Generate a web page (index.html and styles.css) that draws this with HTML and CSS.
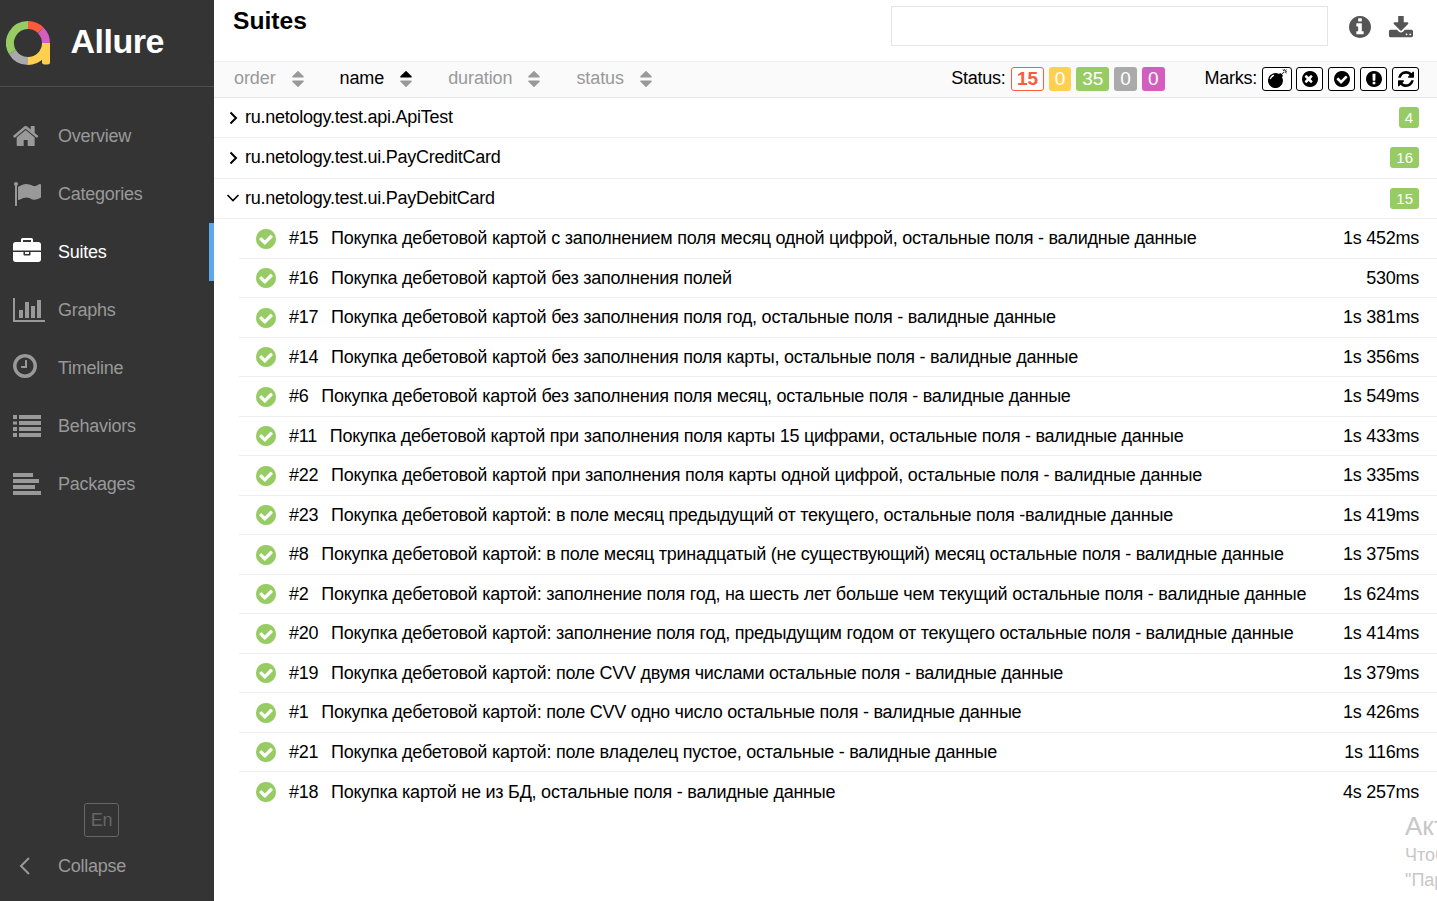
FILE: index.html
```html
<!DOCTYPE html>
<html lang="ru">
<head>
    <meta charset="UTF-8">
    <meta name="viewport" content="width=device-width, initial-scale=1.0">
    <title>Allure Report</title>
    <link rel="stylesheet" href="styles.css">
</head>
<body>
    <svg class="sprite" xmlns="http://www.w3.org/2000/svg">
        <symbol id="i-home" viewBox="84 0 1792 1792"><path d="M1472 992v480q0 26-19 45t-45 19h-384v-384h-256v384h-384q-26 0-45-19t-19-45v-480q0-1 .5-3t.5-3l575-474 575 474q1 2 1 6zm223-69l-62 74q-8 9-21 11h-3q-13 0-21-7l-692-577-692 577q-12 8-24 7-13-2-21-11l-62-74q-8-10-7-23.5t11-21.5l719-599q32-26 76-26t76 26l244 204v-195q0-14 9-23t23-9h192q14 0 23 9t9 23v408l219 182q10 8 11 21.5t-7 23.5z"/></symbol>
        <symbol id="i-flag" viewBox="0 0 1792 1792"><path d="M320 256q0 72-64 110v1266q0 13-9.500 22.500t-22.500 9.500h-64q-13 0-22.500-9.500t-9.500-22.500v-1266q-64-38-64-110 0-53 37.500-90.500t90.500-37.500 90.500 37.500 37.500 90.500zm1472 64v763q0 25-12.500 38.500t-39.500 27.500q-215 116-369 116-61 0-123.500-22t-108.500-48-115.500-48-142.500-22q-192 0-464 146-17 9-33 9-26 0-45-19t-19-45v-742q0-32 31-55 21-14 79-43 236-120 421-120 107 0 200 29t219 88q38 19 88 19 54 0 117.500-21t110-47 88-47 54.500-21q26 0 45 19t19 45z"/></symbol>
        <symbol id="i-case" viewBox="0 0 1792 1792"><path d="M640 256h512v-128h-512v128zm1152 640v480q0 66-47 113t-113 47h-1472q-66 0-113-47t-47-113v-480h672v160q0 26 19 45t45 19h320q26 0 45-19t19-45v-160h672zm-768 0v128h-256v-128h256zm768-480v384h-1792v-384q0-66 47-113t113-47h352v-160q0-40 28-68t68-28h576q40 0 68 28t28 68v160h352q66 0 113 47t47 113z"/></symbol>
        <symbol id="i-chart" viewBox="0 0 2048 1792"><path d="M640 896v512h-256v-512h256zm384-512v1024h-256v-1024h256zm1024 1152v128h-2048v-1536h128v1408h1920zm-640-896v768h-256v-768h256zm384-384v1152h-256v-1152h256z"/></symbol>
        <symbol id="i-clock" viewBox="0 0 1536 1536"><path d="M896 416v448q0 14-9 23t-23 9h-320q-14 0-23-9t-9-23v-64q0-14 9-23t23-9h224v-352q0-14 9-23t23-9h64q14 0 23 9t9 23zm416 352q0-148-73-273t-198-198-273-73-273 73-198 198-73 273 73 273 198 198 273 73 273-73 198-198 73-273zm224 0q0 209-103 385.500t-279.500 279.500-385.500 103-385.500-103-279.500-279.500-103-385.500 103-385.500 279.500-279.500 385.500-103 385.500 103 279.500 279.500 103 385.500z"/></symbol>
        <symbol id="i-list" viewBox="0 0 28 24"><path d="M0 1h4v4H0zM6 1h22v4H6zM0 7.500h4v3H0zM6 7h22v4H6zM0 13h4v4H0zM6 13h22v4H6zM0 19h4v4H0zM6 19h22v4H6z"/></symbol>
        <symbol id="i-lines" viewBox="0 0 28 24"><path d="M0 1h20v4H0zM0 7h26v4H0zM0 13h22v4H0zM0 19h28v4H0z"/></symbol>
        <symbol id="i-check" viewBox="128 128 1536 1536"><path d="M1412 734q0-28-18-46l-91-90q-19-19-45-19t-45 19l-408 407-226-226q-19-19-45-19t-45 19l-91 90q-18 18-18 46 0 27 18 45l362 362q19 19 45 19 27 0 46-19l543-543q18-18 18-45zm252 162q0 209-103 385.500t-279.500 279.500-385.500 103-385.500-103-279.500-279.500-103-385.500 103-385.500 279.500-279.500 385.500-103 385.500 103 279.500 279.500 103 385.500z"/></symbol>
        <symbol id="i-info" viewBox="128 128 1536 1536"><path d="M1152 1376v-160q0-14-9-23t-23-9h-96v-512q0-14-9-23t-23-9h-320q-14 0-23 9t-9 23v160q0 14 9 23t23 9h96v320h-96q-14 0-23 9t-9 23v160q0 14 9 23t23 9h448q14 0 23-9t9-23zm-128-896v-160q0-14-9-23t-23-9h-192q-14 0-23 9t-9 23v160q0 14 9 23t23 9h192q14 0 23-9t9-23zm640 416q0 209-103 385.500t-279.500 279.500-385.500 103-385.500-103-279.500-279.500-103-385.500 103-385.500 279.500-279.500 385.500-103 385.500 103 279.500 279.500 103 385.500z"/></symbol>
        <symbol id="i-download" viewBox="0 128 1728 1408"><path d="M1344 1344q0-26-19-45t-45-19-45 19-19 45 19 45 45 19 45-19 19-45zm256 0q0-26-19-45t-45-19-45 19-19 45 19 45 45 19 45-19 19-45zm128-224v320q0 40-28 68t-68 28h-1472q-40 0-68-28t-28-68v-320q0-40 28-68t68-28h465l135 136q58 56 136 56t136-56l136-136h464q40 0 68 28t28 68zm-325-569q17 41-14 70l-448 448q-18 19-45 19t-45-19l-448-448q-31-29-14-70 17-39 59-39h256v-448q0-26 19-45t45-19h256q26 0 45 19t19 45v448h256q42 0 59 39z"/></symbol>
        <symbol id="i-up" viewBox="384 192 1024 1408"><path d="M1408 704q0 26-19 45t-45 19h-896q-26 0-45-19t-19-45 19-45l448-448q19-19 45-19t45 19l448 448q19 19 19 45z"/></symbol>
        <symbol id="i-down" viewBox="384 192 1024 1408"><path d="M1408 1088q0 26-19 45l-448 448q-19 19-45 19t-45-19l-448-448q-19-19-19-45t19-45 45-19h896q26 0 45 19t19 45z"/></symbol>
        <symbol id="i-bomb" viewBox="0 0 1792 1792"><path d="M571 589q-10-25-34-35t-49 0q-108 44-191 127t-127 191q-10 25 0 49t35 34q13 5 24 5 42 0 60-40 34-84 98.500-148.500t148.500-98.500q25-11 35-35t0-49zm942-356l46 46-244 243 68 68q19 19 19 45.500t-19 45.500l-64 64q89 161 89 343 0 143-55.500 273.500t-150 225-225 150-273.500 55.500-273.500-55.500-225-150-150-225-55.500-273.500 55.500-273.500 150-225 225-150 273.500-55.500q182 0 343 89l64-64q19-19 45.500-19t45.500 19l68 68zm8-56q-10 10-22 10-13 0-23-10l-91-90q-9-10-9-23t9-23q10-9 23-9t23 9l90 91q10 9 10 22.500t-10 22.500zm230 230q-11 9-23 9t-23-9l-90-91q-10-9-10-22.500t10-22.500q9-10 22.500-10t22.500 10l91 90q9 10 9 23t-9 23zm41-183q0 14-9 23t-23 9h-96q-14 0-23-9t-9-23 9-23 23-9h96q14 0 23 9t9 23zm-192-192v96q0 14-9 23t-23 9-23-9-9-23v-96q0-14 9-23t23-9 23 9 9 23zm151 55l-91 90q-10 10-22 10-13 0-23-10-10-9-10-22.500t10-22.500l90-91q10-9 23-9t23 9q9 10 9 23t-9 23z"/></symbol>
        <symbol id="i-times" viewBox="128 128 1536 1536"><path d="M1149 1122q0-26-19-45l-181-181 181-181q19-19 19-45 0-27-19-46l-90-90q-19-19-46-19-26 0-45 19l-181 181-181-181q-19-19-45-19-27 0-46 19l-90 90q-19 19-19 46 0 26 19 45l181 181-181 181q-19 19-19 45 0 27 19 46l90 90q19 19 46 19 26 0 45-19l181-181 181 181q19 19 45 19 27 0 46-19l90-90q19-19 19-46zm515-226q0 209-103 385.500t-279.500 279.500-385.500 103-385.500-103-279.500-279.500-103-385.500 103-385.500 279.500-279.500 385.500-103 385.500 103 279.500 279.500 103 385.500z"/></symbol>
        <symbol id="i-excl" viewBox="128 128 1536 1536"><path d="M896 128q209 0 385.500 103t279.500 279.500 103 385.500-103 385.500-279.500 279.500-385.500 103-385.500-103-279.500-279.500-103-385.500 103-385.500 279.500-279.500 385.500-103zm128 1247v-190q0-14-9-23.500t-22-9.500h-192q-13 0-23 10t-10 23v190q0 13 10 23t23 10h192q13 0 22-9.500t9-23.500zm-2-344l18-621q0-12-10-18-10-8-24-8h-220q-14 0-24 8-10 6-10 18l17 621q0 10 10 17.500t24 7.500h185q14 0 23.500-7.500t10.500-17.500z"/></symbol>
        <symbol id="i-refresh" viewBox="128 128 1536 1536"><path d="M1639 1056q0 5-1 7-64 268-268 434.500t-478 166.500q-146 0-282.500-55t-243.500-157l-129 129q-19 19-45 19t-45-19-19-45v-448q0-26 19-45t45-19h448q26 0 45 19t19 45-19 45l-137 137q71 66 161 102t187 36q134 0 250-65t186-179q11-17 53-117 8-23 30-23h192q13 0 22.500 9.500t9.500 22.500zm25-800v448q0 26-19 45t-45 19h-448q-26 0-45-19t-19-45 19-45l138-138q-148-137-349-137-134 0-250 65t-186 179q-11 17-53 117-8 23-30 23h-199q-13 0-22.500-9.500t-9.500-22.500v-7q65-268 270-434.500t480-166.500q146 0 284 55.500t245 156.500l130-129q19-19 45-19t45 19 19 45z"/></symbol>
    </svg>

    <div class="app">
        <aside class="side">
            <div class="brand">
                <svg class="logo" viewBox="0 0 44 44" width="44" height="44">
                    <g fill="none" stroke-width="8">
                        <path d="M22 4 A18 18 0 0 1 34.700 9.300" stroke="#fd5a3e"/>
                        <path d="M34.700 9.300 A18 18 0 0 1 40 22" stroke="#d35ebe"/>
                        <path d="M40 22 A18 18 0 0 1 22 40" stroke="#ffd050"/>
                        <path d="M22 40 A18 18 0 0 1 6.400 31" stroke="#aaaaaa"/>
                        <path d="M6.400 31 A18 18 0 0 1 22 4" stroke="#97cc64"/>
                    </g>
                    <path d="M36 22 h8 v19 a2.500 2.500 0 0 1 -2.500 2.500 h-3 a2.500 2.500 0 0 1 -2.500 -2.500z" fill="#ffd050"/>
                </svg>
                <span class="brand-name">Allure</span>
            </div>
            <nav class="nav">
                <a class="nav-item"><svg class="nav-ico"><use href="#i-home"/></svg>Overview</a>
                <a class="nav-item"><svg class="nav-ico"><use href="#i-flag"/></svg>Categories</a>
                <a class="nav-item active"><svg class="nav-ico"><use href="#i-case"/></svg>Suites</a>
                <a class="nav-item"><svg class="nav-ico wide"><use href="#i-chart"/></svg>Graphs</a>
                <a class="nav-item"><svg class="nav-ico"><use href="#i-clock" width="24" height="24"/></svg>Timeline</a>
                <a class="nav-item"><svg class="nav-ico"><use href="#i-list"/></svg>Behaviors</a>
                <a class="nav-item"><svg class="nav-ico"><use href="#i-lines"/></svg>Packages</a>
            </nav>
            <div class="side-foot">
                <span class="lang">En</span>
                <a class="nav-item collapse">
                    <svg class="nav-ico" viewBox="0 0 28 28"><path class="chev" d="M16 6 L8 14 L16 22"/></svg>Collapse
                </a>
            </div>
        </aside>

        <main class="main">
            <header class="top">
                <h1 class="title">Suites</h1>
                <input class="search" type="text">
                <svg class="top-ico info"><use href="#i-info"/></svg>
                <svg class="top-ico dl"><use href="#i-download"/></svg>
            </header>

            <div class="bar">
                <span class="sort">order<svg class="sort-ico"><use href="#i-up"/><use href="#i-down"/></svg></span>
                <span class="sort on">name<svg class="sort-ico"><use class="dark" href="#i-up"/><use href="#i-down"/></svg></span>
                <span class="sort">duration<svg class="sort-ico"><use href="#i-up"/><use href="#i-down"/></svg></span>
                <span class="sort">status<svg class="sort-ico"><use href="#i-up"/><use href="#i-down"/></svg></span>
                <div class="filters">
                    <span class="flabel">Status:</span>
                    <span class="stat failed">15</span>
                    <span class="stat broken">0</span>
                    <span class="stat passed">35</span>
                    <span class="stat skipped">0</span>
                    <span class="stat unknown">0</span>
                </div>
                <div class="marks">
                    <span class="mlabel">Marks:</span>
                    <span class="mark first"><svg><use href="#i-bomb"/></svg></span>
                    <span class="mark"><svg><use href="#i-times"/></svg></span>
                    <span class="mark"><svg><use href="#i-check"/></svg></span>
                    <span class="mark"><svg><use href="#i-excl"/></svg></span>
                    <span class="mark"><svg><use href="#i-refresh"/></svg></span>
                </div>
            </div>

            <div class="tree">
                <div class="group">
                    <svg class="arrow" viewBox="0 0 14 14"><path d="M4.500 1.500 L10 7 L4.500 12.500"/></svg>
                    <span class="gname">ru.netology.test.api.ApiTest</span>
                    <span class="count">4</span>
                </div>
                <div class="group">
                    <svg class="arrow" viewBox="0 0 14 14"><path d="M4.500 1.500 L10 7 L4.500 12.500"/></svg>
                    <span class="gname">ru.netology.test.ui.PayCreditCard</span>
                    <span class="count">16</span>
                </div>
                <div class="group">
                    <svg class="arrow" viewBox="0 0 14 14"><path class="thin" d="M1.500 4 L7 9.500 L12.500 4"/></svg>
                    <span class="gname">ru.netology.test.ui.PayDebitCard</span>
                    <span class="count">15</span>
                </div>

                <div class="row"><svg class="ok"><use href="#i-check"/></svg><span class="num">#15</span><span class="name">Покупка дебетовой картой с заполнением поля месяц одной цифрой, остальные поля - валидные данные</span><span class="time">1s 452ms</span></div>
                <div class="row"><svg class="ok"><use href="#i-check"/></svg><span class="num">#16</span><span class="name">Покупка дебетовой картой без заполнения полей</span><span class="time">530ms</span></div>
                <div class="row"><svg class="ok"><use href="#i-check"/></svg><span class="num">#17</span><span class="name">Покупка дебетовой картой без заполнения поля год, остальные поля - валидные данные</span><span class="time">1s 381ms</span></div>
                <div class="row"><svg class="ok"><use href="#i-check"/></svg><span class="num">#14</span><span class="name">Покупка дебетовой картой без заполнения поля карты, остальные поля - валидные данные</span><span class="time">1s 356ms</span></div>
                <div class="row"><svg class="ok"><use href="#i-check"/></svg><span class="num">#6</span><span class="name">Покупка дебетовой картой без заполнения поля месяц, остальные поля - валидные данные</span><span class="time">1s 549ms</span></div>
                <div class="row"><svg class="ok"><use href="#i-check"/></svg><span class="num">#11</span><span class="name">Покупка дебетовой картой при заполнения поля карты 15 цифрами, остальные поля - валидные данные</span><span class="time">1s 433ms</span></div>
                <div class="row"><svg class="ok"><use href="#i-check"/></svg><span class="num">#22</span><span class="name">Покупка дебетовой картой при заполнения поля карты одной цифрой, остальные поля - валидные данные</span><span class="time">1s 335ms</span></div>
                <div class="row"><svg class="ok"><use href="#i-check"/></svg><span class="num">#23</span><span class="name">Покупка дебетовой картой: в поле месяц предыдущий от текущего, остальные поля -валидные данные</span><span class="time">1s 419ms</span></div>
                <div class="row"><svg class="ok"><use href="#i-check"/></svg><span class="num">#8</span><span class="name">Покупка дебетовой картой: в поле месяц тринадцатый (не существующий) месяц остальные поля - валидные данные</span><span class="time">1s 375ms</span></div>
                <div class="row"><svg class="ok"><use href="#i-check"/></svg><span class="num">#2</span><span class="name">Покупка дебетовой картой: заполнение поля год, на шесть лет больше чем текущий остальные поля - валидные данные</span><span class="time">1s 624ms</span></div>
                <div class="row"><svg class="ok"><use href="#i-check"/></svg><span class="num">#20</span><span class="name">Покупка дебетовой картой: заполнение поля год, предыдущим годом от текущего остальные поля - валидные данные</span><span class="time">1s 414ms</span></div>
                <div class="row"><svg class="ok"><use href="#i-check"/></svg><span class="num">#19</span><span class="name">Покупка дебетовой картой: поле CVV двумя числами остальные поля - валидные данные</span><span class="time">1s 379ms</span></div>
                <div class="row"><svg class="ok"><use href="#i-check"/></svg><span class="num">#1</span><span class="name">Покупка дебетовой картой: поле CVV одно число остальные поля - валидные данные</span><span class="time">1s 426ms</span></div>
                <div class="row"><svg class="ok"><use href="#i-check"/></svg><span class="num">#21</span><span class="name">Покупка дебетовой картой: поле владелец пустое, остальные - валидные данные</span><span class="time">1s 116ms</span></div>
                <div class="row last"><svg class="ok"><use href="#i-check"/></svg><span class="num">#18</span><span class="name">Покупка картой не из БД, остальные поля - валидные данные</span><span class="time">4s 257ms</span></div>
            </div>
        </main>
    </div>

    <div class="watermark">
        <div class="wm-head">Активация Windows</div>
        <div class="wm-line">Чтобы активировать Windows,</div>
        <div class="wm-line">"Параметры"</div>
    </div>
</body>
</html>
```

FILE: styles.css
```css
html, body {
    margin: 0;
    height: 100%;
    overflow: hidden;
}
body {
    font-family: "Liberation Sans", Arial, sans-serif;
    font-size: 18px;
    letter-spacing: -0.25px;
    color: #000;
    background: #fff;
}
.sprite {
    display: none;
}
.app {
    display: flex;
    height: 901px;
}

/* sidebar */
.side {
    width: 214px;
    flex-shrink: 0;
    display: flex;
    flex-direction: column;
    background: #343434;
    color: #999;
}
.brand {
    height: 86px;
    display: flex;
    align-items: center;
    gap: 20.500px;
    padding-left: 6px;
    border-bottom: 1px solid #4d4d4d;
}
.logo {
    flex-shrink: 0;
}
.brand-name {
    font-size: 34px;
    font-weight: bold;
    letter-spacing: -0.5px;
    margin-bottom: 4px;
    color: #fff;
}
.nav {
    margin-top: 20px;
}
.nav-item {
    height: 58px;
    display: flex;
    align-items: center;
    padding-left: 13px;
    box-sizing: border-box;
}
.nav-item.active {
    color: #fff;
    border-right: 5px solid #5ca8ea;
}
.nav-ico {
    width: 28px;
    height: 28px;
    margin-right: 17px;
    fill: currentColor;
    flex-shrink: 0;
}
.nav-ico.wide {
    width: 32px;
    margin-right: 13px;
}
.side-foot {
    margin-top: auto;
    padding-bottom: 6px;
}
.lang {
    display: block;
    width: 33px;
    height: 32px;
    line-height: 32px;
    margin-left: 84px;
    text-align: center;
    border: 1px solid #666;
    border-radius: 3px;
    color: #666;
}
.chev {
    fill: none;
    stroke: #999;
    stroke-width: 2;
}

/* header */
.main {
    flex: 1;
    min-width: 0;
}
.top {
    height: 61px;
    display: flex;
    box-sizing: border-box;
    padding: 6px 0 0 19px;
}
.title {
    margin: 0;
    font-size: 24.600px;
    line-height: 30px;
    font-weight: bold;
    letter-spacing: 0;
}
.search {
    width: 437px;
    height: 40px;
    margin-left: auto;
    box-sizing: border-box;
    border: 1px solid #e5e5e5;
    padding: 0 8px;
}
.top-ico {
    fill: #555;
    height: 22px;
    margin-top: 10px;
}
.top-ico.info {
    width: 22px;
    margin-left: 21px;
}
.top-ico.dl {
    width: 25px;
    margin-left: 17px;
    margin-right: 24px;
}

/* sort and filter bar */
.bar {
    height: 37px;
    display: flex;
    align-items: center;
    box-sizing: border-box;
    padding: 0 18px 2px 20px;
    background: #fafafa;
    border-top: 1px solid #eee;
    border-bottom: 1px solid #e8e8e8;
}
.sort {
    display: flex;
    align-items: center;
    gap: 16px;
    margin-right: 36px;
    letter-spacing: -0.1px;
    color: #999;
}
.sort.on {
    color: #000;
}
.sort-ico {
    width: 12px;
    height: 16px;
    fill: #999;
}
.sort-ico .dark {
    fill: #000;
}
.filters {
    margin-left: auto;
    display: flex;
    align-items: center;
    gap: 5px;
}
.flabel {
    margin-right: 1px;
}
.stat {
    height: 24px;
    line-height: 24px;
    padding: 0 6px;
    box-sizing: border-box;
    border-radius: 3px;
    color: #fff;
    font-size: 19px;
    letter-spacing: 0;
}
.failed {
    color: #fd5a3e;
    font-weight: bold;
    background: #fff;
    line-height: 22px;
    padding: 0 4.500px;
    border: 1px solid #fd5a3e;
}
.broken {
    background: #ffd050;
}
.passed {
    background: #97cc64;
}
.skipped {
    background: #aaa;
}
.unknown {
    background: #d35ebe;
}
.marks {
    margin-left: 40px;
    display: flex;
    align-items: center;
    gap: 5px;
}
.mark {
    width: 27px;
    height: 24px;
    display: flex;
    align-items: center;
    justify-content: center;
    box-sizing: border-box;
    border: 1px solid #000;
    border-radius: 3px;
    background: #fff;
}
.mark.first {
    width: 30px;
    margin-right: -1px;
}
.mark svg {
    width: 16px;
    height: 16px;
}
.mark.first svg {
    width: 19px;
    height: 19px;
}

/* tree */
.group {
    height: 40.400px;
    display: flex;
    align-items: center;
    box-sizing: border-box;
    padding: 0 18px 0.400px 12px;
    border-bottom: 1px solid #eee;
}
.arrow {
    width: 14px;
    height: 14px;
    margin-right: 5px;
    fill: none;
    stroke: #000;
    stroke-width: 2;
}
.arrow .thin {
    stroke-width: 1.600;
}
.gname {
    flex: 1;
}
.count {
    height: 21px;
    line-height: 22px;
    padding: 0 6px;
    border-radius: 3px;
    background: #97cc64;
    color: #fff;
    font-size: 15px;
    letter-spacing: 0;
}
.row {
    height: 39.500px;
    margin-left: 25px;
    display: flex;
    align-items: center;
    box-sizing: border-box;
    padding: 0.600px 18px 0 17px;
    border-bottom: 1px solid #eee;
    white-space: nowrap;
}
.row.last {
    border-bottom: 0;
}
.ok {
    width: 20px;
    height: 20px;
    margin-right: 13px;
    fill: #97cc64;
    flex-shrink: 0;
}
.num {
    margin-right: 12.750px;
}
.name {
    flex: 1;
}

/* windows activation text over the page, cut by the screen edge */
.watermark {
    position: absolute;
    right: 0;
    top: 809px;
    width: 32px;
    overflow: hidden;
    white-space: nowrap;
    color: #c8c8c8;
    letter-spacing: 0;
}
.wm-head {
    font-size: 26px;
    line-height: 34px;
}
.wm-line {
    font-size: 18px;
    line-height: 25px;
}
```
